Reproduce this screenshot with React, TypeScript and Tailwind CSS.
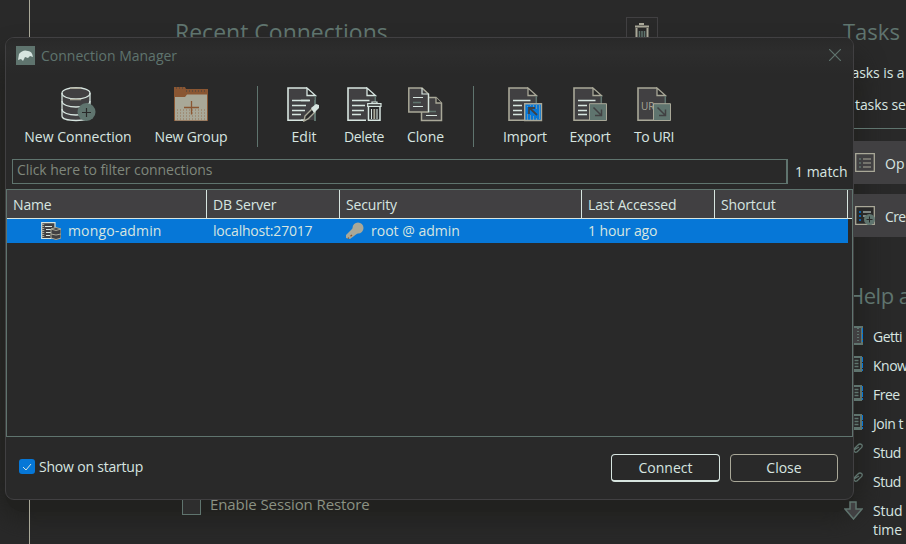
import type { ReactNode } from "react";

function Doc({ stroke, lines = true, right = true }: { stroke: string; lines?: boolean; right?: boolean }) {
  return (
    <g>
      <path d="M1 1H20L28 9V33H1Z" fill="#414042" />
      <path d="M20 1H1V33.2H19" fill="none" stroke={stroke} strokeWidth="1.6" />
      <path d="M20 1V8.5H28.5Z" fill="#292929" stroke={stroke} strokeWidth="1.3" />
      {right && <path d="M28.3 9V17" stroke="#5f746e" strokeWidth="1.5" />}
      {lines && (
        <path d="M5 13.500H22.500M5 18.500H14M5 23.500H14M5 27.500H14" stroke="#d7e5e0" strokeWidth="1.5" />
      )}
    </g>
  );
}

function Icon({ children }: { children: ReactNode }) {
  return (
    <svg className="block h-[35px] w-[35px]" viewBox="0 0 35 35" fill="none">
      {children}
    </svg>
  );
}

function DatabasePlus() {
  return (
    <Icon>
      <path d="M1 6C1-1 29-1 29 6V29C29 35 1 35 1 29Z" fill="#414042" stroke="#d7e5e0" strokeWidth="1.3" />
      <path d="M1 6C1 14 29 14 29 6M1 14C1 22 29 22 29 14M1 22C1 30 29 30 29 22" stroke="#d7e5e0" strokeWidth="1.3" />
      <path d="M9 1.200H20M9 12.500H20" stroke="#a9a898" strokeWidth="1.500" />
      <circle cx="25.500" cy="25" r="9" fill="#5f746e" />
      <path d="M21 25.500H30M25.500 21V30" stroke="#292929" strokeWidth="1.200" />
    </Icon>
  );
}

function FolderPlus() {
  return (
    <Icon>
      <path d="M0 0H11L12 2H34V34H0Z" fill="#8a5632" />
      <path d="M1 10H11L13 7.500H33V33.500H1Z" fill="#a9a898" />
      <path d="M2 1H10M12 4H33" stroke="#414042" strokeDasharray="1 2" />
      <path d="M3 23H32M3 26H32M3 29H32M3 32H32" stroke="#8a5632" strokeDasharray="1 2" opacity=".65" />
      <path d="M10 20.500H25M17.500 14V27.500" stroke="#8a5632" strokeWidth="1.300" />
    </Icon>
  );
}

function EditIcon() {
  return (
    <Icon>
      <Doc stroke="#d7e5e0" />
      <path d="M14 13.500H23M14 18.500H19M14 23.500H18M14 33.200H17" stroke="#d7e5e0" strokeWidth="1.500" />
      <path d="M28 13V34" stroke="#5f746e" strokeWidth="2" />
      <path d="M17 34L18 29L25 22L28 25L21 32Z" fill="#292929" stroke="#a9a898" strokeWidth="1.400" />
      <path d="M24 21L29 17L32 18V21L27 26Z" fill="#d7e5e0" />
    </Icon>
  );
}

function DeleteIcon() {
  return (
    <Icon>
      <Doc stroke="#d7e5e0" />
      <path d="M14 18.500H18M14 23.500H17" stroke="#d7e5e0" strokeWidth="1.500" />
      <path d="M21.500 19V33.300H33V19" fill="#292929" stroke="#d7e5e0" strokeWidth="1.500" />
      <path d="M20.700 16.700H34V19.300H20.700ZM25 16V15H30V16" fill="#292929" stroke="#d7e5e0" strokeWidth="1.200" />
      <path d="M24.500 22V32M30 22V32" stroke="#d7e5e0" strokeWidth="1.100" />
      <path d="M27.300 22V32" stroke="#a9a898" strokeWidth="1.800" />
    </Icon>
  );
}

function CloneIcon() {
  return (
    <Icon>
      <path d="M13.500 10.500H28L33.500 16V33.500H13.500Z" fill="#414042" stroke="#a9a898" strokeWidth="1.500" />
      <path d="M28 10.500V16H33.500" fill="#292929" stroke="#a9a898" strokeWidth="1.300" />
      <path d="M18 24.500H28" stroke="#5f746e" strokeWidth="1.500" />
      <path d="M18 28.500H29" stroke="#d7e5e0" />
      <path d="M.8 1H14L20.500 7V25H.8Z" fill="#414042" stroke="#a9a898" strokeWidth="1.500" />
      <path d="M14 1V7H20.500V25" stroke="#d7e5e0" strokeWidth="1.200" />
      <path d="M5 10.500H15M5 19.500H15" stroke="#d7e5e0" />
      <path d="M5 15.500H13" stroke="#5f746e" strokeWidth="1.500" />
    </Icon>
  );
}

function ImportIcon() {
  return (
    <Icon>
      <Doc stroke="#a9a898" />
      <path d="M16.700 16.700H33.500V33.500H16.700Z" fill="#0677d7" stroke="#a9a898" strokeWidth="1.400" />
      <path
        d="M19.500 19V20M22.500 18V19M25.500 18V20M28.500 18V22M31.500 18V32M28.500 31V33M25.500 29V33M22.500 28V33M19.500 27V33"
        stroke="#a9a898"
        opacity=".6"
      />
      <path d="M29 28L21.500 21M21 27V21H27" stroke="#414042" strokeWidth="1.800" />
    </Icon>
  );
}

function ExportBadge() {
  return (
    <g>
      <path d="M16.500 16.700H33.500V33.500H16.500Z" fill="#5f746e" stroke="#a9a898" />
      <path d="M20.500 20.500L28 28M28.500 22.500V28.500H22" stroke="#414042" strokeWidth="1.500" />
    </g>
  );
}

function ExportIcon() {
  return (
    <Icon>
      <Doc stroke="#a9a898" />
      <ExportBadge />
    </Icon>
  );
}

function UriIcon() {
  return (
    <Icon>
      <Doc stroke="#a9a898" lines={false} />
      <text x="4" y="23" fontSize="10" fill="#a9a898" fontFamily="Open Sans">UR</text>
      <ExportBadge />
    </Icon>
  );
}

function Tool({ icon, label, width, text = "" }: { icon: ReactNode; label: string; width: string; text?: string }) {
  return (
    <button className={`flex flex-col items-center ${width}`}>
      {icon}
      <span className={`mt-[5px] whitespace-nowrap leading-5 text-[#d7e5e0] ${text}`}>{label}</span>
    </button>
  );
}

function Trash() {
  return (
    <svg className="block h-5 w-4" viewBox="0 0 16 20" fill="none">
      <path d="M5 1H10M1 3.500H15" stroke="#a9a898" strokeWidth="2.200" />
      <path d="M2.500 5V19H13.500V5" stroke="#a9a898" strokeWidth="2" />
      <path d="M5.500 8V18M8 8V18M10.500 8V18" stroke="#5f746e" strokeWidth="1.500" />
    </svg>
  );
}

type HelpKind = "film" | "doc" | "link" | "down";

function HelpIcon({ kind }: { kind: HelpKind }) {
  if (kind === "down")
    return (
      <svg className="h-[19px] w-[19px] shrink-0" viewBox="0 0 19 19">
        <path d="M6 1H12V8H18L9.500 18L1 8H6Z" fill="#414042" stroke="#5f746e" strokeWidth="1.500" />
      </svg>
    );
  if (kind === "link")
    return (
      <svg className="mt-[-7px] h-[19px] w-[19px] shrink-0" viewBox="0 0 19 19" fill="none" stroke="#5f746e" strokeWidth="1.300">
        <path d="M9 10L14 5Q16 3 18 5Q19 7 16 9L13 12Q10 13 10 10L15 7M8 9L4 13Q1 17 5 17L9 13" />
      </svg>
    );
  return (
    <svg className="mt-[-2px] h-[19px] w-[19px] shrink-0" viewBox="0 0 19 19" fill="none">
      {kind === "film" ? (
        <>
          <path d="M1 1H18V18H1Z" fill="#414042" stroke="#5f746e" strokeWidth="2" />
          <path d="M14 2V18" stroke="#5f746e" strokeWidth="2" strokeDasharray="1 2" />
        </>
      ) : (
        <>
          <path d="M1 1H18V17H1Z" fill="#5f746e" />
          <path d="M9 3H16V14H9Z" fill="#292929" />
          <path d="M10.500 5.500H14.500M10.500 8.500H14.500M10.500 11.500H14.500" stroke="#5f746e" strokeWidth="1.300" />
        </>
      )}
      <path d="M18.500 2V16" stroke="#0677d7" strokeDasharray="5 1" />
    </svg>
  );
}

const help: { kind: HelpKind; label: string }[] = [
  { kind: "film", label: "Getti" },
  { kind: "doc", label: "Know" },
  { kind: "doc", label: "Free" },
  { kind: "doc", label: "Join t" },
  { kind: "link", label: "Stud" },
  { kind: "link", label: "Stud" },
];

function Backdrop() {
  return (
    <div className="relative flex h-full text-[#a9a898]">
      <div className="w-[30px] shrink-0 border-r border-[#a9a898]" />
      <div className="flex w-[814px] shrink-0 flex-col justify-between pl-[145px]">
        <div className="flex pt-[17px]">
          <h2 className="w-[451px] text-[23px] leading-[30px] text-[#5f746e]">Recent Connections</h2>
          <div className="flex h-8 w-8 justify-center border border-[#414042] pt-[5px]">
            <Trash />
          </div>
        </div>
        <div className="flex items-center pb-[29px] pl-[7px] text-[15px] leading-5">
          <span className="mr-[9px] h-[19px] w-[19px] border border-[#5f746e] bg-[#2e2e2e]" />
          <span className="mt-[-3px] tracking-[-0.1px] text-[#8b9283]">Enable Session Restore</span>
        </div>
      </div>
      <div className="flex w-[62px] shrink-0 flex-col whitespace-nowrap text-[14px] text-[#d7e5e0]">
        <h2 className="mt-[16px] -ml-[1px] text-[22px] leading-[30px] text-[#5f746e]">Tasks</h2>
        <p className="mt-[17px] leading-5 tracking-[-0.1px]">Tasks is a</p>
        <p className="mt-[12px] ml-[11px] leading-5 tracking-[-0.1px]">tasks se</p>
        <div className="mt-[13px] border-t border-[#5f746e]" />
        <div className="mt-[12px] flex h-[43px] items-center gap-[10px] bg-[#414042] pl-[11px]">
          <svg className="h-[19px] w-5 shrink-0" viewBox="0 0 20 19" fill="none">
            <path d="M.7.7H19.300V18.300H.7Z" stroke="#a9a898" strokeWidth="1.300" />
            <path d="M8 6H16M8 10H16M8 14H16" stroke="#a9a898" strokeWidth="1.200" />
            <path d="M4 6H6M4 10H6M4 14H6" stroke="#5f746e" strokeWidth="1.500" />
          </svg>
          <span className="pt-px">Op</span>
        </div>
        <div className="mt-[10px] flex h-[43px] items-center gap-[10px] bg-[#414042] pl-[11px]">
          <svg className="h-[19px] w-5 shrink-0" viewBox="0 0 20 19" fill="none">
            <path d="M.7.7H19.300V18.300H.7Z" fill="#292929" stroke="#a9a898" strokeWidth="1.300" />
            <path d="M8 6H16M8 10H11" stroke="#d7e5e0" strokeWidth="1.200" />
            <path d="M4 6H6M4 10H6M4 14H6" stroke="#0677d7" strokeWidth="1.500" />
            <circle cx="14.500" cy="13.500" r="5.500" fill="#5f746e" />
            <path d="M11.500 13.500H17.500M14.500 10.500V16.500" stroke="#292929" />
          </svg>
          <span className="pt-px tracking-[-0.6px]">Cre</span>
        </div>
        <h2 className="mt-[43px] ml-[4px] text-[22px] leading-[30px] tracking-[-0.5px] text-[#5f746e]">Help a</h2>
        <ul className="mt-[12px]">
          {help.map((item, i) => (
            <li key={i} className="flex h-[29px] items-center gap-[10px]">
              <HelpIcon kind={item.kind} />
              <span className="tracking-[-0.5px]">{item.label}</span>
            </li>
          ))}
          <li className="flex gap-[10px] pt-[5px]">
            <HelpIcon kind="down" />
            <span className="leading-[19px] tracking-[-0.1px]">Stud<br />time</span>
          </li>
        </ul>
      </div>
    </div>
  );
}

function TitleBar() {
  return (
    <div className="flex h-[36px] shrink-0 items-center bg-[linear-gradient(#292929_0,#2d2d2d_40%,#292929)] pl-[10px] pr-[12px]">
      <svg className="mt-[-2px] h-[19px] w-[19px]" viewBox="0 0 19 19">
        <path d="M0 0H19V19H0Z" fill="#5f746e" />
        <path d="M2 14L3 8Q7 3 12 5Q16 5 17 11L14 10L12 12L9 11L7 15L5 13Z" fill="#d7e5e0" />
      </svg>
      <h1 className="ml-[6px] grow text-[14px] leading-5 text-[#5f746e]">Connection Manager</h1>
      <svg className="mt-[-2px] h-[12px] w-[12px]" viewBox="0 0 12 12" stroke="#5f746e" strokeWidth="1.200">
        <path d="M0 0L12 12M12 0L0 12" />
      </svg>
    </div>
  );
}

const columns = "grid grid-cols-[200px_133px_242px_133px_133px]";

function ConnectionTable() {
  return (
    <div className="mt-[5px] h-[248px] shrink-0 border border-[#5f746e]">
      <div className="h-[29px] border-b border-[#d7e5e0] bg-[#414042] leading-[29px]">
        <div className={`${columns} h-full`}>
          {["Name", "DB Server", "Security", "Last Accessed", "Shortcut"].map((title) => (
            <div key={title} className="h-[28px] border-r border-[#d7e5e0] pl-[6px] tracking-[-0.15px]">{title}</div>
          ))}
        </div>
      </div>
      <div className={`${columns} h-6 w-[841px] items-center bg-[#0677d7] leading-6`}>
        <div className="flex items-center pl-[34px]">
          <svg className="mr-[7px] h-[18px] w-5" viewBox="0 0 20 18" fill="none">
            <path d="M.7.7H14V16.500H.7Z" fill="#414042" stroke="#d7e5e0" strokeWidth="1.200" />
            <path d="M2 2V16" stroke="#a9a898" strokeWidth="2.500" strokeDasharray="1 1" />
            <path d="M4 4.500H11M5 7.500H11M5 10.500H10M5 13.500H9" stroke="#d7e5e0" />
            <path d="M10 7Q15 4 20 7V16Q15 19 10 16Z" fill="#414042" stroke="#a9a898" />
            <path d="M10 7Q15 10 20 7M10 12Q15 14 20 12" stroke="#a9a898" />
          </svg>
          <span className="tracking-[0.15px]">mongo-admin</span>
        </div>
        <div className="pl-[6px] tracking-[-0.2px]">localhost:27017</div>
        <div className="flex items-center pl-[6px]">
          <svg className="mr-[7px] h-[18px] w-[18px]" viewBox="0 0 18 18">
            <circle cx="12" cy="6" r="5.500" fill="#a9a898" />
            <path d="M7 6L12 11L4 17L0 16V13Z" fill="#a9a898" />
            <path d="M6 13L2 16.500" stroke="#8a5632" strokeDasharray="2 2" strokeWidth="1.300" />
          </svg>
          root @ admin
        </div>
        <div className="pl-[6px] tracking-[-0.1px]">1 hour ago</div>
        <div />
      </div>
    </div>
  );
}

function Dialog() {
  return (
    <section className="absolute top-[37px] left-[5px] flex h-[463px] w-[849px] flex-col overflow-hidden rounded-[9px] border border-[#414042] bg-[#292929] text-[14px] text-[#d7e5e0]">
      <TitleBar />
      <nav className="flex h-[85px] shrink-0 pt-[13px]">
        <Tool icon={<DatabasePlus />} label="New Connection" width="w-[144px]" />
        <Tool icon={<FolderPlus />} label="New Group" width="w-[82px]" text="tracking-[-0.15px]" />
        <div className="mt-[-1px] mr-[16px] ml-[25px] h-[61px] w-px shrink-0 bg-[#5f746e]" />
        <Tool icon={<EditIcon />} label="Edit" width="w-[60px]" />
        <Tool icon={<DeleteIcon />} label="Delete" width="w-[60px]" text="tracking-[-0.35px]" />
        <Tool icon={<CloneIcon />} label="Clone" width="w-[63px]" />
        <div className="mt-[-1px] mr-[19px] ml-[16px] h-[61px] w-px shrink-0 bg-[#5f746e]" />
        <Tool icon={<ImportIcon />} label="Import" width="w-[64px]" text="tracking-[-0.1px]" />
        <Tool icon={<ExportIcon />} label="Export" width="w-[66px]" text="tracking-[-0.3px]" />
        <Tool icon={<UriIcon />} label="To URI" width="w-[62px]" text="tracking-[-0.4px]" />
      </nav>
      <div className="flex h-[25px] shrink-0 pl-[6px]">
        <div className="w-[776px] border border-r-2 border-[#5f746e] pl-1 leading-[19px] tracking-[-0.06px] text-[#7f877c]">
          Click here to filter connections
        </div>
        <span className="ml-[7px] pt-[3px] leading-5 whitespace-nowrap">1 match</span>
      </div>
      <ConnectionTable />
      <footer className="flex grow items-center pr-[15px] pb-px pl-[13px]">
        <label className="mt-[-2px] flex grow items-center tracking-[-0.2px]">
          <span className="mr-[4px] flex h-[15px] w-[16px] items-center justify-center rounded-[3px] bg-[#0677d7]">
            <svg className="h-[8px] w-[10px]" viewBox="0 0 10 8" fill="none" stroke="#d7e5e0">
              <path d="M1 4L4 7L9 1" />
            </svg>
          </span>
          Show on startup
        </label>
        <button className="mr-[10px] h-[28px] w-[109px] rounded-[4px] border border-b-2 border-[#d7e5e0]">Connect</button>
        <button className="h-[28px] w-[108px] rounded-[4px] border border-[#a9a898]">Close</button>
      </footer>
    </section>
  );
}

export default function App() {
  return (
    <main className="relative h-[544px] w-[906px] overflow-hidden bg-[#292929] font-['Open_Sans','Noto_Sans',sans-serif]">
      <div className="absolute top-[60px] left-[5px] h-[452px] w-[849px] rounded-[20px] bg-[#21211f] shadow-[0_0_24px_8px_#21211f]" />
      <Backdrop />
      <Dialog />
    </main>
  );
}
